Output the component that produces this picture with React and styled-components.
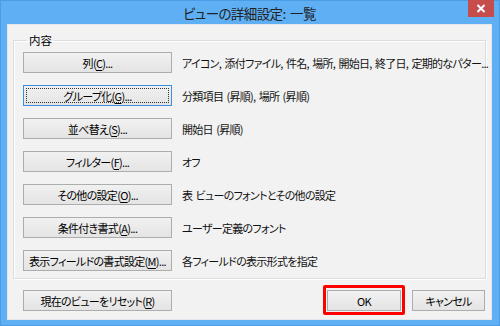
import React from 'react'
import styled, { createGlobalStyle } from 'styled-components'

const GlobalStyle = createGlobalStyle`
  html, body {
    margin: 0;
    padding: 0;
    background: #ffffff;
  }
`

const font = `"Noto Sans CJK JP", "Noto Sans", sans-serif`

const Frame = styled.div`
  width: 500px;
  height: 326px;
  box-sizing: border-box;
  background: #5eaff4;
  border: 1px solid #4a9ce4;
  display: flex;
  flex-direction: column;
  padding: 0 7px 5px 6px;
  font-family: ${font};
  font-feature-settings: 'palt';
`

const TitleBar = styled.div`
  height: 23px;
  flex-shrink: 0;
  position: relative;
  display: flex;
  align-items: center;
  justify-content: center;
  font-size: 13.5px;
  color: #222;
  letter-spacing: -0.6px;
  word-spacing: 2px;
`

const CloseButton = styled.div`
  position: absolute;
  top: -1px;
  right: -2px;
  width: 26px;
  height: 17px;
  background: #c74c4c;
  display: flex;
  align-items: center;
  justify-content: center;
`

const Client = styled.div`
  flex: 1;
  background: #f2f2f2;
  border: 1px solid #e4e8ee;
  box-sizing: border-box;
  padding: 9px 5px 0 5px;
  display: flex;
  flex-direction: column;
`

const GroupBox = styled.fieldset`
  margin: 0;
  padding: 6px 0 7px 9px;
  border: 1px solid #dcdcdc;
  box-shadow: inset 1px 1px 0 #ffffff, 1px 1px 0 #ffffff;
  display: flex;
  flex-direction: column;
  gap: 12px;
  min-width: 0;
`

const Legend = styled.legend`
  font-size: 11.5px;
  color: #000;
  padding: 0 2px;
  margin-left: 4px;
  line-height: 12px;
`

const Row = styled.div`
  display: flex;
  align-items: center;
  gap: 10px;
`

const Button = styled.div`
  position: relative;
  box-sizing: border-box;
  width: ${p => p.$w || 149}px;
  height: 21px;
  flex-shrink: 0;
  border: 1px solid ${p => (p.$focused ? '#3c8fe0' : '#adadad')};
  background: linear-gradient(#f1f1f1, #e4e4e4);
  display: flex;
  align-items: center;
  justify-content: center;
  font-size: 11px;
  letter-spacing: -0.7px;
  color: #000;
  white-space: nowrap;

  ${p =>
    p.$focused &&
    `
    &::after {
      content: '';
      position: absolute;
      inset: 2px;
      border: 1px dotted #333;
    }
  `}
`

const Key = styled.span`
  text-decoration: underline;
  text-underline-offset: 2px;
`

const Desc = styled.div`
  font-size: 11px;
  letter-spacing: -0.7px;
  word-spacing: 1.5px;
  color: #111;
  white-space: nowrap;
`

const Footer = styled.div`
  display: flex;
  align-items: center;
  padding: 11px 0 0 10px;
`

const Spacer = styled.div`
  flex: 1;
`

const FooterRight = styled.div`
  display: flex;
  gap: 11px;
  margin-right: 1px;
`

const Highlight = styled.div`
  position: absolute;
  left: -5px;
  top: -6px;
  right: -5px;
  bottom: -5px;
  border: 3px solid #ff0000;
  border-radius: 2px;
  pointer-events: none;
`

const rows = [
  { label: '列', key: 'C', desc: 'アイコン, 添付ファイル, 件名, 場所, 開始日, 終了日, 定期的なパター...' },
  { label: 'グループ化', key: 'G', desc: '分類項目 (昇順), 場所 (昇順)', focused: true },
  { label: '並べ替え', key: 'S', desc: '開始日 (昇順)' },
  { label: 'フィルター', key: 'F', desc: 'オフ' },
  { label: 'その他の設定', key: 'O', desc: '表 ビューのフォントとその他の設定' },
  { label: '条件付き書式', key: 'A', desc: 'ユーザー定義のフォント' },
  { label: '表示フィールドの書式設定', key: 'M', desc: '各フィールドの表示形式を指定' }
]

export default function App() {
  return (
    <>
      <GlobalStyle />
      <Frame>
        <TitleBar>
          ビューの詳細設定: 一覧
          <CloseButton>
            <svg width="10" height="9" viewBox="0 0 10 9">
              <path d="M1.5 1 L8.5 8 M8.5 1 L1.5 8" stroke="#fff" strokeWidth="2" />
            </svg>
          </CloseButton>
        </TitleBar>
        <Client>
          <GroupBox>
            <Legend>内容</Legend>
            {rows.map(r => (
              <Row key={r.key}>
                <Button $focused={r.focused}>
                  {r.label}(<Key>{r.key}</Key>)...
                </Button>
                <Desc>{r.desc}</Desc>
              </Row>
            ))}
          </GroupBox>
          <Footer>
            <Button>
              現在のビューをリセット(<Key>R</Key>)
            </Button>
            <Spacer />
            <FooterRight>
              <Button $w={74}>
                OK
                <Highlight />
              </Button>
              <Button $w={73}>キャンセル</Button>
            </FooterRight>
          </Footer>
        </Client>
      </Frame>
    </>
  )
}
